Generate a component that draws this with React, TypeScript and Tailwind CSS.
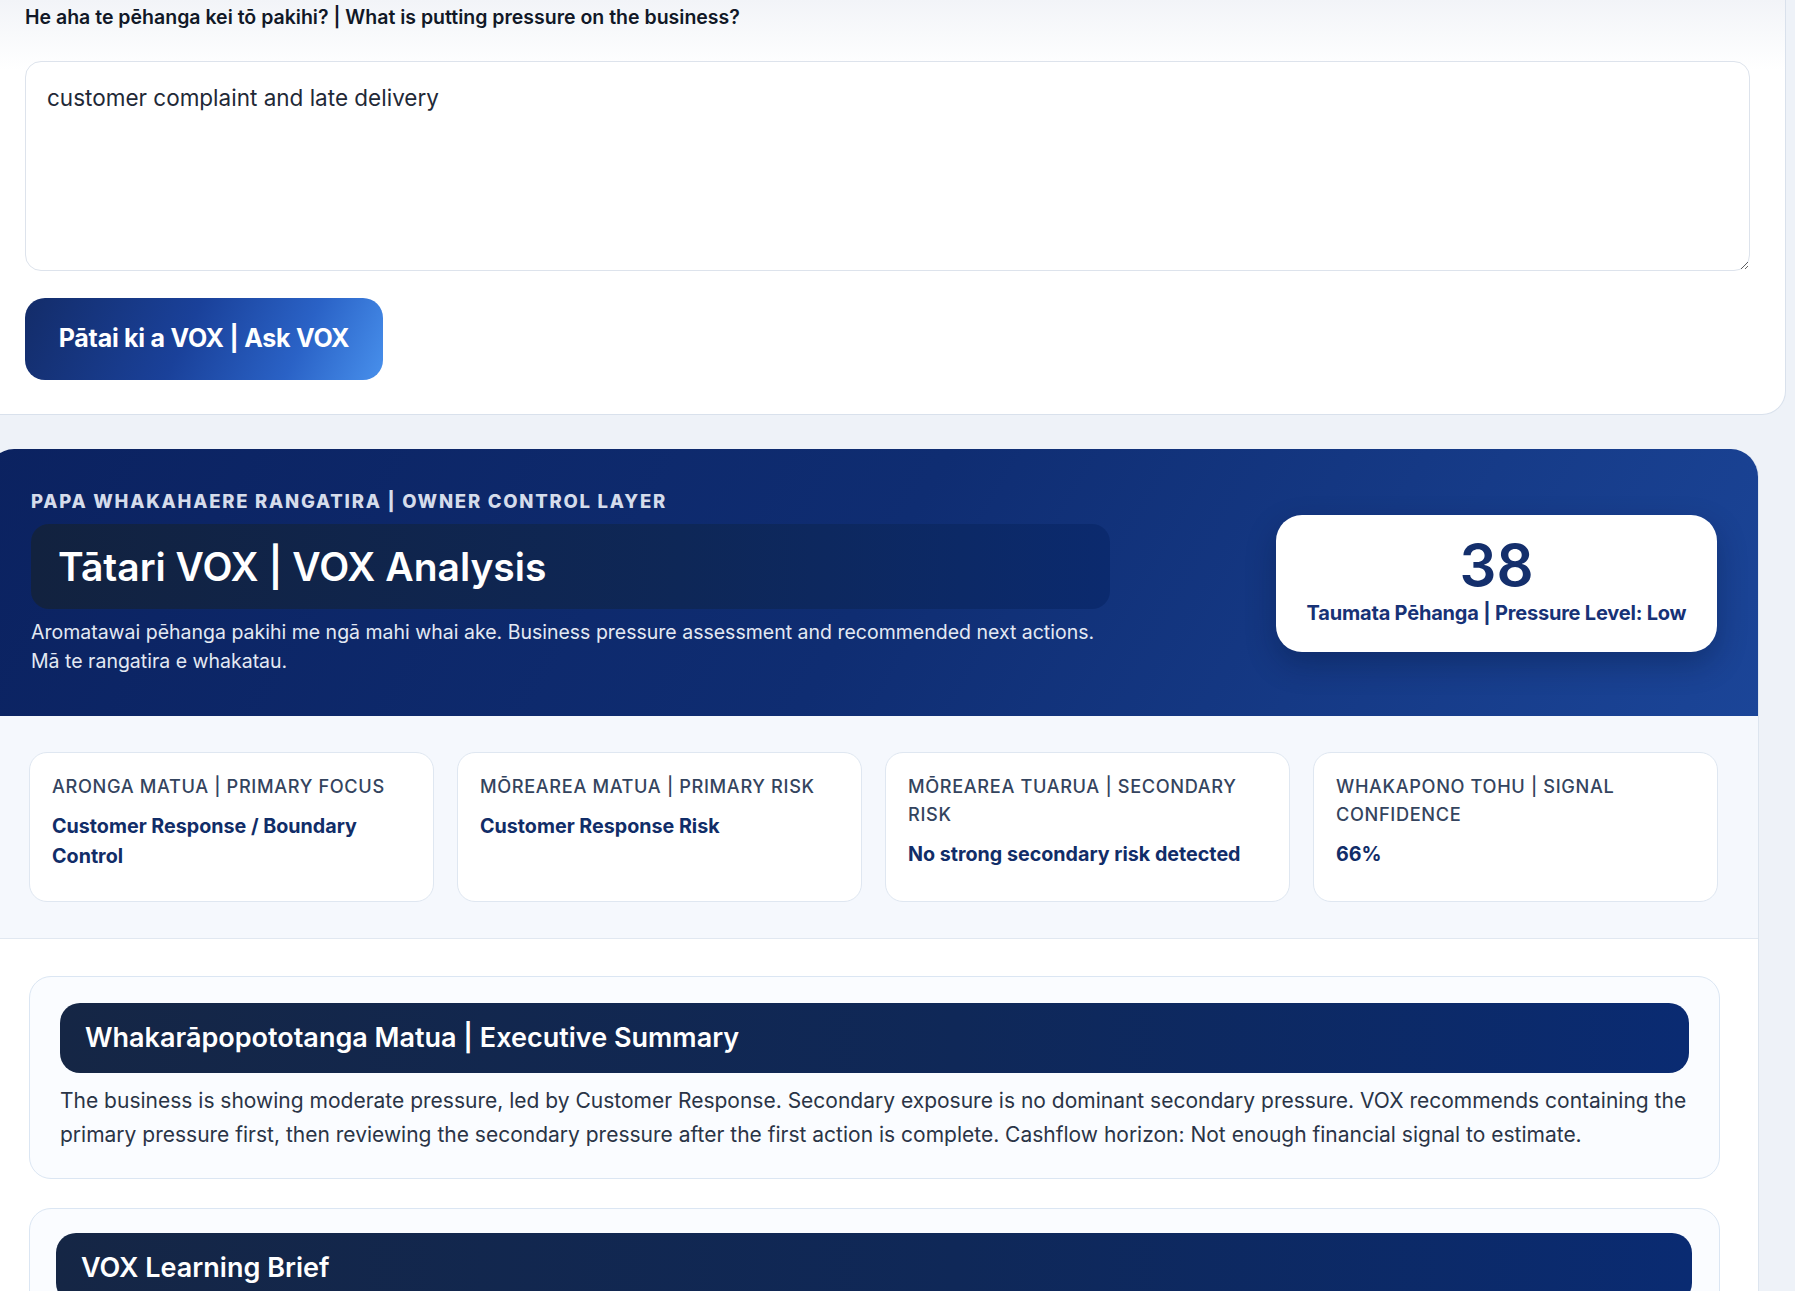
import React from "react";

const cards = [
  { label: "ARONGA MATUA | PRIMARY FOCUS", value: "Customer Response / Boundary Control" },
  { label: "MŌREAREA MATUA | PRIMARY RISK", value: "Customer Response Risk" },
  { label: "MŌREAREA TUARUA | SECONDARY RISK", value: "No strong secondary risk detected" },
  { label: "WHAKAPONO TOHU | SIGNAL CONFIDENCE", value: "66%" },
];

export default function App() {
  return (
    <div className="min-h-screen w-full overflow-hidden bg-[#eef2f8] font-['Inter','Noto_Sans',sans-serif] text-[#111827]">
      {/* Question card */}
      <div className="ml-[-30px] w-[1816px] rounded-b-[24px] border border-t-0 border-[#d9e1ec] bg-[linear-gradient(180deg,#f2f4f8_0px,#ffffff_70px)] pl-[54px] pr-[35px] pt-[5px] pb-[34px]">
        <p className="text-[19.5px] font-semibold leading-[24px] text-[#111827]">
          He aha te pēhanga kei tō pakihi? | What is putting pressure on the business?
        </p>
        <textarea
          className="mt-[32px] block h-[210px] w-full resize-y rounded-[16px] border border-[#dde3ec] bg-white px-[21px] py-[21px] text-[22.5px] leading-[30px] text-[#1f2937] outline-none"
          defaultValue="customer complaint and late delivery"
        />
        <button className="mt-[27px] flex h-[82px] w-[358px] items-center justify-center rounded-[20px] bg-[linear-gradient(115deg,#132c69_0%,#1a419a_45%,#2a62c6_75%,#4890ec_100%)] text-[25px] font-bold tracking-[-0.01em] text-white">
          Pātai ki a VOX | Ask VOX
        </button>
      </div>

      {/* Analysis card */}
      <div className="mt-[34px] ml-[-14px] w-[1773px] overflow-hidden rounded-t-[28px] border-x border-[#dde5ef] bg-white">
        <div className="flex items-center justify-between bg-[linear-gradient(120deg,#0b2260_0%,#0f2d72_50%,#1b4598_100%)] pl-[44px] pr-[41px] pt-[41px] pb-[40px]">
          <div className="w-[1079px]">
            <p className="text-[18.5px] font-extrabold leading-[22px] tracking-[0.095em] text-[#d5dceb]">
              PAPA WHAKAHAERE RANGATIRA | OWNER CONTROL LAYER
            </p>
            <div className="mt-[12px] flex h-[85px] items-center rounded-[18px] bg-[linear-gradient(90deg,#12223f_0%,#0e2757_60%,#0b2a6e_100%)] pl-[27px]">
              <h1 className="text-[39px] font-semibold leading-[46px] text-white">Tātari VOX | VOX Analysis</h1>
            </div>
            <p className="mt-[9px] text-[19.5px] leading-[29px] text-[#e3e9f3]">
              Aromatawai pēhanga pakihi me ngā mahi whai ake. Business pressure assessment and recommended next actions.
              <br />
              Mā te rangatira e whakatau.
            </p>
          </div>
          <div className="flex h-[137px] w-[441px] flex-col items-center rounded-[26px] bg-white pt-[18px] shadow-[0_12px_30px_rgba(3,15,45,0.3)]">
            <div className="text-[58px] font-semibold leading-[64px] text-[#142f6c]">38</div>
            <div className="mt-[3px] text-[20px] font-bold leading-[26px] tracking-[-0.01em] text-[#173276]">
              Taumata Pēhanga | Pressure Level: Low
            </div>
          </div>
        </div>

        <div className="grid grid-cols-4 gap-[23px] border-b border-[#e1e8f1] bg-[#f5f8fd] pl-[42px] pr-[40px] pt-[36px] pb-[36px]">
          {cards.map((c) => (
            <div key={c.label} className="h-[150px] rounded-[18px] border border-[#dfe7f1] bg-white pl-[22px] pr-[26px] pt-[19px]">
              <p className="text-[18.2px] font-medium leading-[28px] tracking-[0.035em] text-[#34445e]">{c.label}</p>
              <p className="mt-[11px] text-[19.7px] font-bold leading-[30px] text-[#112d68]">{c.value}</p>
            </div>
          ))}
        </div>

        <div className="pl-[42px] pr-[38px] pt-[37px] pb-[40px]">
          <div className="rounded-[22px] border border-[#dbe6f3] bg-[#fafcff] px-[30px] pt-[26px] pb-[26px]">
            <div className="flex h-[70px] items-center rounded-[20px] bg-[linear-gradient(90deg,#152645_0%,#0f2858_55%,#0a2b72_100%)] pl-[25px]">
              <h2 className="text-[27px] font-semibold leading-[34px] text-white">
                Whakarāpopototanga Matua | Executive Summary
              </h2>
            </div>
            <p className="mt-[11px] text-[21px] leading-[34px] text-[#2a3446]">
              The business is showing moderate pressure, led by Customer Response. Secondary exposure is no dominant secondary pressure. VOX recommends containing the primary pressure first, then reviewing the secondary pressure after the first action is complete. Cashflow horizon: Not enough financial signal to estimate.
            </p>
          </div>

          <div className="mt-[29px] rounded-[22px] border border-[#dbe6f3] bg-[#fafcff] pl-[26px] pr-[27px] pt-[24px] pb-[26px]">
            <div className="flex h-[70px] items-center rounded-[20px] bg-[linear-gradient(90deg,#152645_0%,#0f2858_55%,#0a2b72_100%)] pl-[25px]">
              <h2 className="text-[27px] font-semibold leading-[34px] text-white">VOX Learning Brief</h2>
            </div>
            <p className="mt-[11px] text-[21px] leading-[34px] text-[#2a3446]">&nbsp;</p>
          </div>
        </div>
      </div>
    </div>
  );
}
